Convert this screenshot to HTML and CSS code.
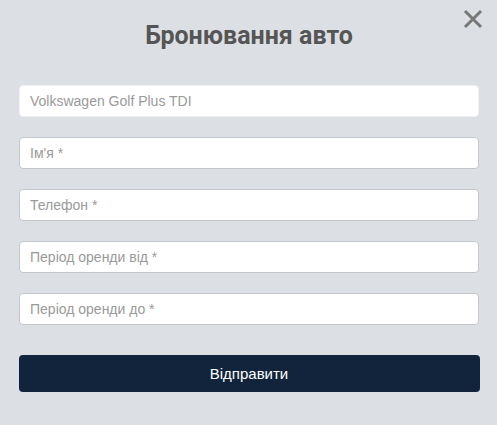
FILE: index.html
```html
<!DOCTYPE html>
<html lang="uk">
<head>
<meta charset="utf-8">
<link rel="stylesheet" href="styles.css">
</head>
<body>
<div class="modal">
  <button class="close" type="button" aria-label="Закрити">
    <svg width="20" height="20" viewBox="0 0 20 20"><path d="M2 2 L18 18 M18 2 L2 18" stroke="#777" stroke-width="3" fill="none"/></svg>
  </button>
  <h2 class="title">Бронювання авто</h2>
  <form class="form">
    <input class="field field-readonly" type="text" placeholder="Volkswagen Golf Plus TDI" readonly>
    <input class="field" type="text" placeholder="Ім'я *">
    <input class="field" type="text" placeholder="Телефон *">
    <input class="field" type="text" placeholder="Період оренди від *">
    <input class="field" type="text" placeholder="Період оренди до *">
    <button class="submit" type="button">Відправити</button>
  </form>
</div>
</body>
</html>
```
FILE: styles.css
```css
html, body {
  margin: 0;
  padding: 0;
  background: #dce0e4;
  height: 100%;
}
.modal {
  position: relative;
  padding: 0 18px 0 19px;
  font-family: "Liberation Sans", Arial, sans-serif;
}
.close {
  position: absolute;
  top: 9px;
  right: 14px;
  width: 20px;
  height: 20px;
  padding: 0;
  border: 0;
  background: none;
  cursor: pointer;
}
.close svg { display: block; }
.title {
  margin: 0;
  padding-top: 19px;
  font-family: Roboto, "Liberation Sans", sans-serif;
  font-weight: 700;
  font-size: 25px;
  line-height: 34px;
  color: #555;
  text-align: center;
}
.form {
  display: flex;
  flex-direction: column;
  gap: 20px;
  padding-top: 32px;
}
.field {
  box-sizing: border-box;
  height: 32px;
  width: 100%;
  margin: 0;
  padding: 0 10px;
  border: 1px solid #c4c8cc;
  border-radius: 4px;
  background: #fff;
  font-family: "Liberation Sans", Arial, sans-serif;
  font-size: 14px;
  color: #333;
  outline: none;
}
.field::placeholder { color: #9a9a9a; }
.field-readonly { border-color: #eef0f2; }
.submit {
  margin-top: 10px;
  height: 37px;
  width: calc(100% + 1px);
  margin-left: -0.5px;
  border: 0;
  border-radius: 4px;
  background: #11243c;
  color: #fff;
  font-family: "Liberation Sans", Arial, sans-serif;
  font-size: 15px;
  cursor: pointer;
}
```
